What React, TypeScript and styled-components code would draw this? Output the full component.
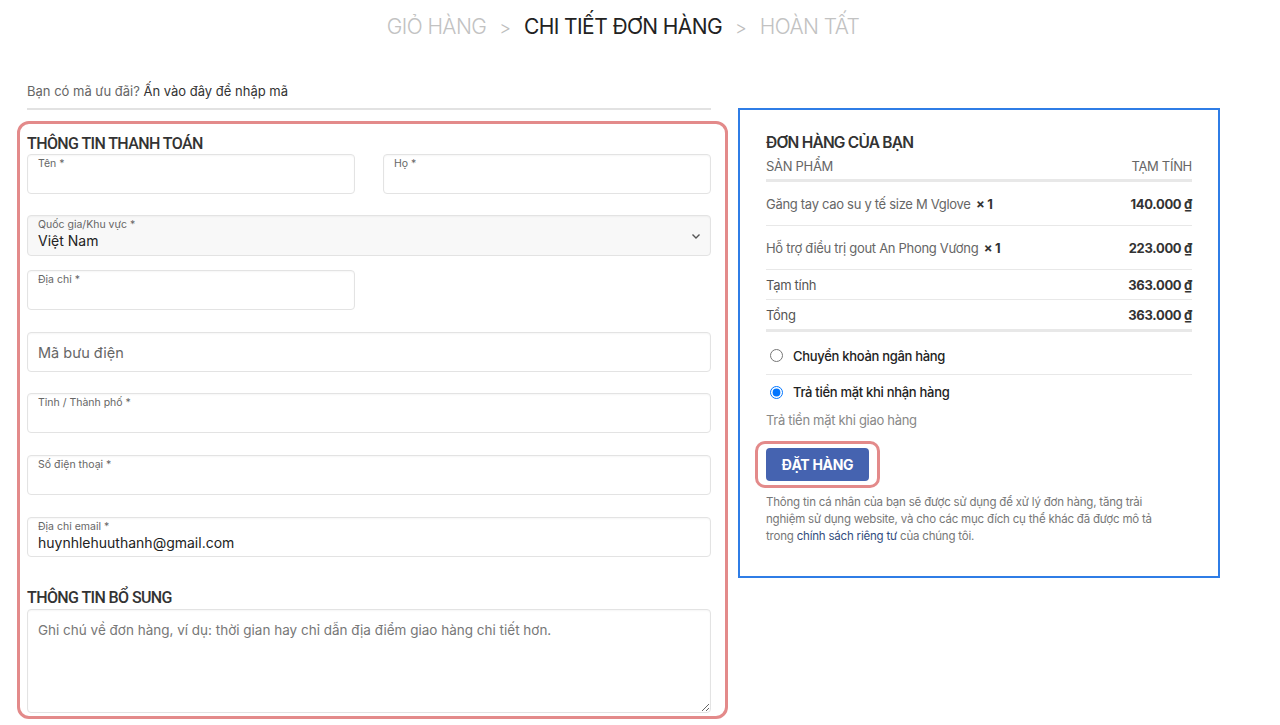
import styled, { createGlobalStyle } from "styled-components";

const GlobalStyle = createGlobalStyle`
  * {
    box-sizing: border-box;
  }
  body {
    margin: 0;
    background: #fff;
    font-family: Inter, "Noto Sans", sans-serif;
    color: #333;
  }
`;

type Item = { name: string; qty: number; price: string };

const items: Item[] = [
  { name: "Găng tay cao su y tế size M Vglove", qty: 1, price: "140.000 ₫" },
  { name: "Hỗ trợ điều trị gout An Phong Vương", qty: 1, price: "223.000 ₫" },
];

export default function App() {
  return (
    <Page>
      <GlobalStyle />
      <Breadcrumb>
        <Step>GIỎ HÀNG</Step>
        <Sep>&gt;</Sep>
        <Step $active>CHI TIẾT ĐƠN HÀNG</Step>
        <Sep>&gt;</Sep>
        <Step>HOÀN TẤT</Step>
      </Breadcrumb>

      <Columns>
        <LeftCol>
          <Coupon>
            Bạn có mã ưu đãi? <strong>Ấn vào đây để nhập mã</strong>
          </Coupon>

          <Highlight>
            <SectionTitle>THÔNG TIN THANH TOÁN</SectionTitle>
            <Row>
              <Field $half>
                <FieldLabel>Tên *</FieldLabel>
              </Field>
              <Field $half>
                <FieldLabel>Họ *</FieldLabel>
              </Field>
            </Row>
            <Field $select $gap={14}>
              <FieldLabel>Quốc gia/Khu vực *</FieldLabel>
              <FieldValue>Việt Nam</FieldValue>
              <Chevron viewBox="0 0 12 12">
                <path d="M2.5 4.5 6 8l3.5-3.5" fill="none" stroke="#555" strokeWidth="1.4" />
              </Chevron>
            </Field>
            <Row>
              <Field $half $gap={22}>
                <FieldLabel>Địa chỉ *</FieldLabel>
              </Field>
            </Row>
            <Field $center>
              <Placeholder>Mã bưu điện</Placeholder>
            </Field>
            <Field $gap={22}>
              <FieldLabel>Tỉnh / Thành phố *</FieldLabel>
            </Field>
            <Field $gap={22}>
              <FieldLabel>Số điện thoại *</FieldLabel>
            </Field>
            <Field $gap={31}>
              <FieldLabel>Địa chỉ email *</FieldLabel>
              <FieldValue>huynhlehuuthanh@gmail.com</FieldValue>
            </Field>

            <SectionTitle>THÔNG TIN BỔ SUNG</SectionTitle>
            <Notes placeholder="Ghi chú về đơn hàng, ví dụ: thời gian hay chỉ dẫn địa điểm giao hàng chi tiết hơn." />
          </Highlight>
        </LeftCol>

        <OrderPanel>
          <PanelTitle>ĐƠN HÀNG CỦA BẠN</PanelTitle>
          <HeadRow>
            <span>SẢN PHẨM</span>
            <span>TẠM TÍNH</span>
          </HeadRow>
          {items.map((it) => (
            <ItemRow key={it.name}>
              <span>
                {it.name} <Qty>× {it.qty}</Qty>
              </span>
              <Price>{it.price}</Price>
            </ItemRow>
          ))}
          <TotalRow>
            <span>Tạm tính</span>
            <Price>363.000 ₫</Price>
          </TotalRow>
          <TotalRow $last>
            <span>Tổng</span>
            <Price>363.000 ₫</Price>
          </TotalRow>

          <PayOption $divider>
            <input type="radio" name="pay" />
            Chuyển khoản ngân hàng
          </PayOption>
          <PayOption>
            <input type="radio" name="pay" defaultChecked />
            Trả tiền mặt khi nhận hàng
          </PayOption>
          <PayNote>Trả tiền mặt khi giao hàng</PayNote>

          <ButtonRing>
            <OrderButton>ĐẶT HÀNG</OrderButton>
          </ButtonRing>

          <Privacy>
            Thông tin cá nhân của bạn sẽ được sử dụng để xử lý đơn hàng, tăng trải
            nghiệm sử dụng website, và cho các mục đích cụ thể khác đã được mô tả
            trong <PolicyLink>chính sách riêng tư</PolicyLink> của chúng tôi.
          </Privacy>
        </OrderPanel>
      </Columns>
    </Page>
  );
}

const Page = styled.div`
  width: 1280px;
  height: 725px;
  overflow: hidden;
`;

const Breadcrumb = styled.div`
  display: flex;
  justify-content: center;
  align-items: center;
  gap: 13px;
  padding: 12px 0 0 0;
  margin-left: -34px;
  height: 42px;
`;

const Step = styled.span<{ $active?: boolean }>`
  font-size: 21px;
  line-height: 30px;
  letter-spacing: -0.6px;
  font-weight: ${(p) => (p.$active ? 400 : 300)};
  color: ${(p) => (p.$active ? "#222" : "#c2c2c2")};
`;

const Sep = styled.span`
  font-size: 18px;
  font-weight: 300;
  color: #bdbdbd;
`;

const Columns = styled.div`
  display: flex;
  align-items: flex-start;
  gap: 10px;
  padding: 30px 0 0 17px;
`;

const LeftCol = styled.div`
  width: 711px;
`;

const Coupon = styled.div`
  margin: 0 17px 0 10px;
  padding: 10px 0 8px;
  font-size: 13px;
  line-height: 18px;
  color: #666;
  border-bottom: 2px solid #e2e2e2;

  strong {
    font-weight: 400;
    color: #333;
  }
`;

const Highlight = styled.div`
  margin-top: 11px;
  border: 3px solid #e38a8a;
  border-radius: 12px;
  padding: 10px 14px 3px 7px;
`;

const SectionTitle = styled.h3`
  margin: 0;
  font-family: Roboto, "Noto Sans", sans-serif;
  font-size: 16px;
  line-height: 20px;
  font-weight: 500;
  letter-spacing: -0.6px;
  color: #333;
`;

const Row = styled.div`
  display: flex;
  justify-content: space-between;
`;

const Field = styled.div<{ $half?: boolean; $select?: boolean; $center?: boolean; $gap?: number }>`
  position: relative;
  width: ${(p) => (p.$half ? "328px" : "100%")};
  height: ${(p) => (p.$select ? "41px" : "40px")};
  margin-bottom: ${(p) => (p.$gap !== undefined ? p.$gap : 21)}px;
  padding: ${(p) => (p.$center ? "0 10px" : "2px 10px 0")};
  display: flex;
  flex-direction: column;
  justify-content: ${(p) => (p.$center ? "center" : "flex-start")};
  border: 1px solid #e3e3e3;
  border-radius: 4px;
  background: ${(p) => (p.$select ? "#f8f8f8" : "#fff")};
  box-shadow: inset 0 1px 2px rgba(0, 0, 0, 0.04);
`;

const FieldLabel = styled.span`
  font-size: 10.5px;
  line-height: 13px;
  color: #666;
`;

const FieldValue = styled.span`
  font-size: 14px;
  line-height: 19px;
  color: #222;
`;

const Placeholder = styled.span`
  font-size: 14.5px;
  color: #666;
`;

const Chevron = styled.svg`
  position: absolute;
  right: 8px;
  top: 14px;
  width: 12px;
  height: 12px;
`;

const Notes = styled.textarea`
  display: block;
  width: 100%;
  height: 104px;
  margin: 1px 0 0;
  padding: 10px 10px;
  border: 1px solid #e3e3e3;
  border-radius: 4px;
  font-family: Inter, "Noto Sans", sans-serif;
  font-size: 13.5px;
  line-height: 20px;
  color: #333;
  resize: vertical;
  box-shadow: inset 0 1px 2px rgba(0, 0, 0, 0.04);

  &::placeholder {
    color: #777;
  }
`;

const OrderPanel = styled.div`
  width: 482px;
  margin-top: 36px;
  border: 2px solid #2f7de6;
  padding: 23px 26px 31px;
  font-size: 13px;
  letter-spacing: -0.3px;
`;

const PanelTitle = styled.h3`
  margin: 0 0 4px;
  font-size: 15.5px;
  line-height: 20px;
  font-weight: 600;
  letter-spacing: -0.8px;
  color: #333;
`;

const HeadRow = styled.div`
  display: flex;
  justify-content: space-between;
  font-size: 13px;
  line-height: 18px;
  color: #666;
  padding-bottom: 4px;
  border-bottom: 3px solid #e8e8e8;
`;

const ItemRow = styled.div`
  display: flex;
  justify-content: space-between;
  align-items: center;
  height: 44px;
  border-bottom: 1px solid #e8e8e8;
  color: #666;
`;

const Qty = styled.strong`
  font-weight: 700;
  color: #333;
  margin-left: 2px;
`;

const Price = styled.span`
  font-weight: 700;
  color: #333;
`;

const TotalRow = styled.div<{ $last?: boolean }>`
  display: flex;
  justify-content: space-between;
  align-items: center;
  height: ${(p) => (p.$last ? "32px" : "30px")};
  border-bottom: ${(p) => (p.$last ? "3px" : "1px")} solid #e8e8e8;
  color: #555;
`;

const PayOption = styled.label<{ $divider?: boolean }>`
  display: flex;
  align-items: center;
  gap: 10px;
  height: ${(p) => (p.$divider ? "43px" : "33px")};
  padding-top: ${(p) => (p.$divider ? "5px" : "1px")};
  padding-left: 4px;
  border-bottom: ${(p) => (p.$divider ? "1px solid #e8e8e8" : "none")};
  font-size: 13px;
  font-weight: 500;
  color: #222;

  input {
    margin: 0;
    width: 13px;
    height: 13px;
  }
`;

const PayNote = styled.div`
  font-size: 13px;
  line-height: 18px;
  color: #888;
  padding: 3px 0 0;
`;

const ButtonRing = styled.div`
  display: inline-block;
  margin: 12px 0 0 -11px;
  padding: 4px 8px;
  border: 3px solid #e38a8a;
  border-radius: 10px;
`;

const OrderButton = styled.button`
  display: block;
  width: 103px;
  height: 33px;
  border: none;
  border-radius: 4px;
  background: #4563b0;
  color: #fff;
  font-family: Inter, "Noto Sans", sans-serif;
  font-size: 14px;
  font-weight: 700;
  letter-spacing: -0.3px;
`;

const Privacy = styled.p`
  max-width: 400px;
  margin: 6px 0 0;
  font-size: 11.5px;
  line-height: 17px;
  letter-spacing: -0.2px;
  color: #777;
`;

const PolicyLink = styled.span`
  color: #334d80;
`;
